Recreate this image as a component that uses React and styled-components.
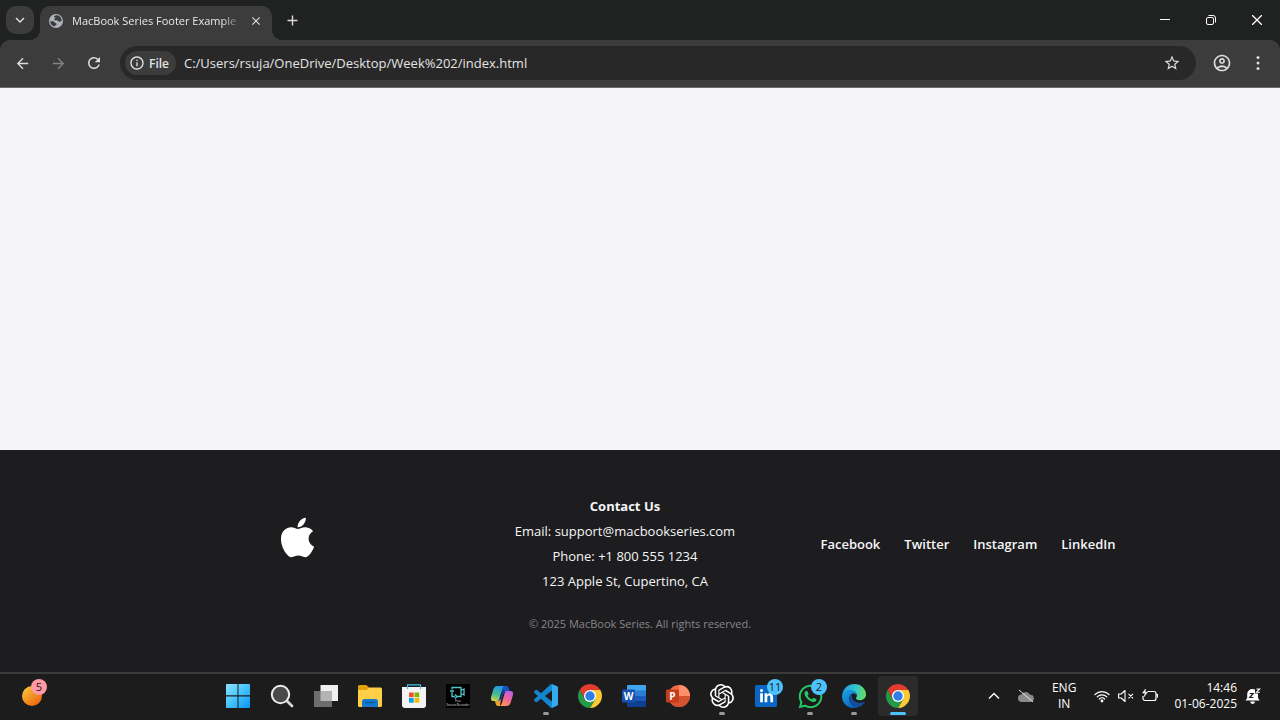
import React from "react";
import styled, { createGlobalStyle } from "styled-components";
import { FaApple, FaWhatsapp, FaLinkedinIn } from "react-icons/fa";
import { SiOpenai } from "react-icons/si";
import {
  MdArrowBack, MdArrowForward, MdRefresh, MdStarBorder,
  MdInfoOutline, MdOutlineAccountCircle, MdKeyboardArrowDown, MdClose, MdAdd,
} from "react-icons/md";

const GlobalStyle = createGlobalStyle`
  * { box-sizing: border-box; }
  body {
    margin: 0;
    font-family: "Segoe UI", "Open Sans", "Noto Sans", sans-serif;
    background: #1d1d1f;
  }
  button, input { font: inherit; color: inherit; }
  svg { display: block; }
`;

const Screen = styled.div`
  min-height: 100vh;
  display: flex;
  flex-direction: column;
`;

/* Browser */
const TabStrip = styled.header`
  height: 40px;
  display: flex;
  align-items: center;
  padding-left: 6px;
  background: #202221;
  color: #e8e8e8;
`;

const IconButton = styled.button`
  display: grid;
  place-items: center;
  flex: none;
  width: ${(p) => p.$width || 28}px;
  height: ${(p) => p.$height || 28}px;
  padding: 0;
  border: 0;
  border-radius: ${(p) => p.$radius || 0}px;
  background: ${(p) => p.$bg || "transparent"};
  color: ${(p) => p.$color || "#dcdcdc"};
`;

const Tab = styled.div`
  position: relative;
  align-self: flex-end;
  display: flex;
  align-items: center;
  width: 232px;
  height: 34px;
  margin-left: 6px;
  padding: 0 6px 4px 8px;
  border-radius: 10px 10px 0 0;
  background: #3c3c3c;
  &::before, &::after {
    content: "";
    position: absolute;
    bottom: 0;
    width: 10px;
    height: 10px;
  }
  &::before {
    right: 100%;
    background: radial-gradient(circle at 0 0, transparent 10px, #3c3c3c 10px);
  }
  &::after {
    left: 100%;
    background: radial-gradient(circle at 100% 0, transparent 10px, #3c3c3c 10px);
  }
`;

const TabTitle = styled.span`
  flex: 1;
  margin-left: 8px;
  overflow: hidden;
  white-space: nowrap;
  font-size: 11px;
  line-height: 20px;
  mask-image: linear-gradient(to right, #000 86%, transparent 98%);
`;

const WindowControls = styled.div`
  display: flex;
  margin-left: auto;
`;

const ToolbarBack = styled.div`
  background: #202221;
`;

const Toolbar = styled.nav`
  display: flex;
  align-items: center;
  gap: 8px;
  height: 48px;
  padding: 0 8px 1px;
  border-bottom: 1px solid #6a6a6a;
  border-radius: 10px 10px 0 0;
  background: #3c3c3c;
`;

const Omnibox = styled.div`
  flex: 1;
  display: flex;
  align-items: center;
  gap: 8px;
  height: 34px;
  margin: 0 4px;
  padding: 0 10px 0 5px;
  border-radius: 17px;
  background: #282828;
  color: #e4e4e4;
`;

const FileChip = styled.button`
  display: flex;
  align-items: center;
  gap: 4px;
  height: 24px;
  padding: 0 7px 0 4px;
  border: 0;
  border-radius: 12px;
  background: #3c3c3c;
  font-size: 12px;
  font-weight: 600;
`;

const Address = styled.input`
  flex: 1;
  min-width: 0;
  padding: 0;
  border: 0;
  outline: 0;
  background: transparent;
  font-size: 13px;
  line-height: 20px;
`;

/* Web page */
const Page = styled.main`
  flex: 1;
  background: #f5f5f7;
`;

const Footer = styled.footer`
  padding: 44px 20px 38px;
  background: #1d1d1f;
  color: #f5f5f7;
  font-size: 13px;
  line-height: 25px;
`;

const FooterGrid = styled.div`
  display: grid;
  grid-template-columns: 314fr 342fr 344fr;
  align-items: center;
  max-width: 1000px;
  margin: 0 auto;
`;

const Logo = styled.a`
  justify-self: center;
  padding-bottom: 14px;
  color: #fff;
`;

const Contact = styled.address`
  font-style: normal;
  text-align: center;
  p { margin: 0; }
`;

const Links = styled.nav`
  display: flex;
  justify-content: center;
  gap: 24px;
`;

const FooterLink = styled.a`
  color: #f5f5f7;
  font-weight: 600;
  text-decoration: none;
`;

const Copyright = styled.p`
  margin: 20px 0 0;
  color: #86868b;
  font-size: 11px;
  line-height: 20px;
  text-align: center;
`;

/* Taskbar */
const Taskbar = styled.section`
  display: grid;
  grid-template-columns: 218px auto 1fr;
  align-items: center;
  height: 48px;
  padding-bottom: 2px;
  border-top: 2px solid #3a3a3a;
  background: #1c1c1c;
  color: #fff;
`;

const Apps = styled.div`
  display: flex;
  gap: 4px;
`;

const AppButton = styled.button`
  position: relative;
  display: grid;
  place-items: center;
  width: 40px;
  height: 40px;
  padding: 0;
  border: 0;
  border-radius: 4px;
  background: ${(p) => (p.$active ? "#2b2b2b" : "transparent")};
  &::after {
    content: "";
    display: ${(p) => (p.$running || p.$active ? "block" : "none")};
    position: absolute;
    bottom: 1px;
    width: ${(p) => (p.$active ? 16 : 6)}px;
    height: 3px;
    border-radius: 2px;
    background: ${(p) => (p.$active ? "#4cc2ff" : "#9a9a9a")};
  }
`;

const Widgets = styled(AppButton)`
  margin-left: 12px;
`;

const Badge = styled.span`
  position: absolute;
  top: 3px;
  right: ${(p) => p.$right}px;
  width: 16px;
  height: 16px;
  border-radius: 8px;
  background: ${(p) => p.$bg};
  color: #1c1c1c;
  font-size: 11px;
  line-height: 16px;
  text-align: center;
`;

const Tray = styled.div`
  display: flex;
  align-items: center;
  justify-content: flex-end;
  padding-right: 19px;
  font-size: 12px;
  line-height: 16px;
`;

const TrayGroup = styled.div`
  display: flex;
  gap: 8px;
  margin: 0 16px 0 18px;
`;

const TrayText = styled.div`
  text-align: ${(p) => p.$align};
  margin: ${(p) => p.$margin || "0"};
`;

const Svg = ({ size = 24, children, ...rest }) => (
  <svg width={size} height={size} viewBox="0 0 24 24" fill="none" aria-hidden="true" {...rest}>
    {children}
  </svg>
);

const Globe = () => (
  <svg width="16" height="16" viewBox="0 0 16 16" aria-hidden="true">
    <circle cx="8" cy="8" r="7" fill="#aeb3b9" />
    <path d="M8.500 2.200C10.500 2.200 13.500 4 13.800 7.500c-.8.900-1.500 1.200-2.300 1.200-1.300 0-1.200-1.400-2.700-1.500-1.400 0-2.600.2-2.600-.9S7.700 5.800 7.600 5C7.500 4.200 6 4.500 6 3.600S7.200 2.300 8.500 2.200zM2.200 8.300c2-.3 4.200.1 4.700 1.200.4.900 1.700.6 1.700 1.700 0 1.100-1.700.9-2 2.400A5.800 5.800 0 0 1 2.200 8.300z" fill="#3c3c3c" />
  </svg>
);

const Chrome = () => (
  <Svg>
    <path d="M1.610 6A12 12 0 0 1 22.390 6H12L6.804 15z" fill="#e33b2e" />
    <path d="M22.390 6A12 12 0 0 1 12 24L17.196 15 12 6z" fill="#fcc934" />
    <path d="M12 24A12 12 0 0 1 1.610 6L6.804 15H17.196z" fill="#249a48" />
    <circle cx="12" cy="12" r="6" fill="#fff" />
    <circle cx="12" cy="12" r="4.700" fill="#2f7de9" />
  </Svg>
);

const Windows = () => (
  <Svg>
    <defs>
      <linearGradient id="win" x1="0" y1="0" x2="24" y2="24" gradientUnits="userSpaceOnUse">
        <stop stopColor="#8be2ff" /><stop offset=".5" stopColor="#45c3fb" /><stop offset="1" stopColor="#0a93f5" />
      </linearGradient>
    </defs>
    <path d="M1 0h10.500v11.300H0V1a1 1 0 0 1 1-1zM12.500 0H23a1 1 0 0 1 1 1v10.300H12.500zM0 12.500h11.500V24H1a1 1 0 0 1-1-1zM12.500 12.500H24V23a1 1 0 0 1-1 1H12.500z" fill="url(#win)" />
  </Svg>
);

const Search = () => (
  <Svg>
    <path d="M16.500 16.500L22 22" stroke="#d8d8d8" strokeWidth="2.800" strokeLinecap="round" />
    <circle cx="10.500" cy="10.500" r="8.700" fill="#4a4a4a" stroke="#ededed" strokeWidth="2" />
  </Svg>
);

const TaskView = () => (
  <Svg>
    <path d="M6.500 1h17.500v16H6.500z" fill="#f0f0f0" />
    <path d="M0 7h18v16H0z" fill="#6d6d6d" />
    <path d="M6.500 7H18v10H6.500z" fill="#b4b4b4" />
  </Svg>
);

const Explorer = () => (
  <Svg>
    <path d="M0 2.500A1.500 1.500 0 0 1 1.500 1h6.800L11 3.500V9H0z" fill="#e3a008" />
    <path d="M0 6h8.500L11 3.500h11.500A1.500 1.500 0 0 1 24 5v16.500a1.500 1.500 0 0 1-1.500 1.500h-21A1.500 1.500 0 0 1 0 21.500z" fill="#ffcf48" />
    <path d="M4 23v-5.500A2.500 2.500 0 0 1 6.500 15h11a2.500 2.500 0 0 1 2.500 2.500V23z" fill="#1479ce" />
    <path d="M7 18.500h10" stroke="#075598" strokeWidth="1.200" />
  </Svg>
);

const Store = () => (
  <Svg>
    <path d="M0 3h24v18a3 3 0 0 1-3 3H3a3 3 0 0 1-3-3z" fill="#f3f3f5" />
    <path d="M5.500 5V.800h13V5" stroke="#3cc2ee" strokeWidth="1.200" />
    <path d="M7 8.500h4.700v4.700H7z" fill="#f05024" /><path d="M12.500 8.500h4.700v4.700h-4.700z" fill="#7eb900" />
    <path d="M7 14h4.700v4.700H7z" fill="#00a3ee" /><path d="M12.500 14h4.700v4.700h-4.700z" fill="#feb800" />
  </Svg>
);

const RecorderIcon = styled.span`
  display: flex;
  flex-direction: column;
  align-items: center;
  width: 24px;
  height: 24px;
  padding-top: 2px;
  background: #000;
  color: #e0e0e0;
  font-size: 3px;
  line-height: 4px;
  white-space: nowrap;
`;

const Recorder = () => (
  <RecorderIcon>
    <svg width="16" height="13" viewBox="0 0 16 13" fill="none" stroke="#4fc6cc" strokeWidth="1.300" aria-hidden="true">
      <path d="M2 3.500V1.500h9v9H7M2 6v4.500h3M11 4.500l3-1.500v6l-3-1.500M5 8.500l2 2-2 2M0 5h4" />
    </svg>
    <span>Free</span>
    <span>Screen Recorder</span>
  </RecorderIcon>
);

const Copilot = () => (
  <Svg>
    <defs>
      <linearGradient id="cpA" x1="8" y1="2" x2="5" y2="18" gradientUnits="userSpaceOnUse">
        <stop stopColor="#1f9ae8" /><stop offset=".55" stopColor="#49bd8e" /><stop offset="1" stopColor="#e8d735" />
      </linearGradient>
      <linearGradient id="cpB" x1="20" y1="6" x2="12" y2="22" gradientUnits="userSpaceOnUse">
        <stop stopColor="#b45cf0" /><stop offset=".5" stopColor="#f0659c" /><stop offset="1" stopColor="#ff9a4c" />
      </linearGradient>
    </defs>
    <path d="M13 2h3.500c1.500 0 2 1 2.500 2.700L20 8h-4c-2 0-2.700 1-3.200 2.700L11 17H7z" fill="#1852c4" />
    <path d="M7.500 2h7.300c-1.300 0-2 1-2.500 2.800L9.500 14.500C9 16.200 8 17 6.500 17H3.300C1 17 .5 15 1.200 12.500l2-6.800C4 3.300 5.200 2 7.500 2z" fill="url(#cpA)" />
    <path d="M5 17h3c1.500 0 2.500-.8 3-2.500l-1 7.500H8c-1.500 0-2-1-2.400-2.500z" fill="#f0a12d" />
    <path d="M16.500 22H9.300c1.300 0 2-1 2.500-2.800l2.800-9.700C15 7.800 16 7 17.500 7h3.200c2.300 0 2.800 2 2.100 4.500l-2 6.800C20 20.700 18.800 22 16.500 22z" fill="url(#cpB)" />
    <path d="M9.800 15.500l1.800-6.300c.5-1.700 1.200-2.400 2.800-2.400" stroke="#1c1c1c" strokeWidth="1" />
  </Svg>
);

const Code = () => (
  <Svg>
    <path fillRule="evenodd" d="M23.150 2.587L18.210.210a1.494 1.494 0 0 0-1.705.290l-9.460 8.630-4.120-3.128a.999.999 0 0 0-1.276.057L.327 7.261A1 1 0 0 0 .326 8.740L3.899 12 .326 15.260a1 1 0 0 0 .001 1.479L1.650 17.940a.999.999 0 0 0 1.276.057l4.120-3.128 9.460 8.630a1.492 1.492 0 0 0 1.704.290l4.942-2.377A1.500 1.500 0 0 0 24 20.060V3.939a1.500 1.500 0 0 0-.850-1.352zm-5.146 14.861L10.826 12l7.178-5.448v10.896z" fill="#1286d0" />
    <path d="M18 .2l5.200 2.400a1.500 1.500 0 0 1 .8 1.300v16.200a1.500 1.500 0 0 1-.8 1.300L18 23.800z" fill="#36aaf0" />
  </Svg>
);

const Word = () => (
  <Svg>
    <path d="M5 2a1 1 0 0 1 1-1h17a1 1 0 0 1 1 1v5H5z" fill="#41a5ee" />
    <path d="M5 6.500h19V12H5z" fill="#2b7cd3" /><path d="M5 12h19v5.500H5z" fill="#185abd" />
    <path d="M5 17.500h19V22a1 1 0 0 1-1 1H6a1 1 0 0 1-1-1z" fill="#103f91" />
    <rect y="5.500" width="13" height="13" rx="1" fill="#1752b0" />
    <text x="6.500" y="15.700" fill="#fff" fontSize="10" fontWeight="700" textAnchor="middle">W</text>
  </Svg>
);

const PowerPoint = () => (
  <Svg>
    <circle cx="13" cy="12" r="11" fill="#ed6c47" />
    <path d="M13 1a11 11 0 0 1 11 11H13z" fill="#ff8f6b" />
    <path d="M2 12h22a11 11 0 0 1-22 0z" fill="#d35230" />
    <rect y="5.500" width="13" height="13" rx="1" fill="#c43e1c" />
    <text x="6.500" y="15.700" fill="#fff" fontSize="10" fontWeight="700" textAnchor="middle">P</text>
  </Svg>
);

const Edge = () => (
  <Svg>
    <defs>
      <linearGradient id="edgeTop" x1="1" y1="6" x2="24" y2="10" gradientUnits="userSpaceOnUse">
        <stop stopColor="#269bdc" /><stop offset=".5" stopColor="#32c5cf" /><stop offset="1" stopColor="#67df59" />
      </linearGradient>
      <linearGradient id="edgeLeft" x1="2" y1="8" x2="12" y2="24" gradientUnits="userSpaceOnUse">
        <stop stopColor="#189ddf" /><stop offset="1" stopColor="#0c62bd" />
      </linearGradient>
    </defs>
    <path d="M.2 11C1 4.500 6 0 12.300 0 19 0 24 5 24 10.200c0 3.600-2.600 6-6 6-2.600 0-4-1-4-2 0-.7.900-1 .9-2.600C14.900 9 12.500 7 9 6.500c-4-.5-7 1.500-8.800 4.500z" fill="url(#edgeTop)" />
    <path d="M.1 12C.5 8 4 6 8 6c3.500 0 6.500 2.300 6.900 5-1.200-1.500-3.800-2-5.400-1C5 13 8 22.500 15 23.600 7 25.800-.2 20 .1 12z" fill="url(#edgeLeft)" />
    <path d="M10 9.600C5 13 7 22.500 14.500 23.700c3.600-.6 6.500-2.500 8.100-5.200.4-.6-.1-1-.8-.6C16 20.700 8.500 17 10 9.600z" fill="#114d98" />
  </Svg>
);

const LinkedInTile = styled.span`
  display: grid;
  place-items: center;
  width: 22px;
  height: 22px;
  border-radius: 2px;
  background: #0a66c2;
  color: #fff;
`;

const apps = [
  { name: "Start", icon: <Windows /> },
  { name: "Search", icon: <Search /> },
  { name: "Task View", icon: <TaskView /> },
  { name: "File Explorer", icon: <Explorer /> },
  { name: "Microsoft Store", icon: <Store /> },
  { name: "Free Screen Recorder", icon: <Recorder /> },
  { name: "Copilot", icon: <Copilot /> },
  { name: "Visual Studio Code", icon: <Code />, running: true },
  { name: "Google Chrome", icon: <Chrome /> },
  { name: "Word", icon: <Word /> },
  { name: "PowerPoint", icon: <PowerPoint /> },
  { name: "ChatGPT", icon: <SiOpenai size={24} color="#fff" />, running: true },
  { name: "LinkedIn", icon: <LinkedInTile><FaLinkedinIn size={15} /></LinkedInTile>, badge: "11" },
  { name: "WhatsApp", icon: <FaWhatsapp size={27} color="#25c863" />, running: true, badge: "2" },
  { name: "Edge", icon: <Edge />, running: true },
  { name: "Chrome window", icon: <Chrome />, active: true },
];

export default function App() {
  return (
    <Screen>
      <GlobalStyle />
      <TabStrip>
        <IconButton $bg="#3c3c3c" $radius={10} aria-label="Search tabs"><MdKeyboardArrowDown size={18} /></IconButton>
        <Tab>
          <Globe />
          <TabTitle>MacBook Series Footer Example</TabTitle>
          <IconButton $width={20} $height={20} aria-label="Close tab"><MdClose size={14} /></IconButton>
        </Tab>
        <IconButton $width={40} aria-label="New tab"><MdAdd size={17} /></IconButton>
        <WindowControls>
          <IconButton $width={46} $color="#fff" aria-label="Minimize">
            <Svg size={10} viewBox="0 0 10 10" stroke="currentColor"><path d="M0 4.500h10" /></Svg>
          </IconButton>
          <IconButton $width={46} $color="#fff" aria-label="Restore">
            <Svg size={10} viewBox="0 0 10 10" stroke="currentColor">
              <rect x=".5" y="2.500" width="7" height="7" rx="1.500" />
              <path d="M2.500 .5H7A2.500 2.500 0 0 1 9.500 3v4.500" />
            </Svg>
          </IconButton>
          <IconButton $width={46} $color="#fff" aria-label="Close">
            <Svg size={10} viewBox="0 0 10 10" stroke="currentColor" strokeWidth="1.300"><path d="M0 0l10 10M10 0L0 10" /></Svg>
          </IconButton>
        </WindowControls>
      </TabStrip>
      <ToolbarBack>
        <Toolbar aria-label="Browser">
          <IconButton aria-label="Back"><MdArrowBack size={17} /></IconButton>
          <IconButton $color="#838383" aria-label="Forward"><MdArrowForward size={17} /></IconButton>
          <IconButton aria-label="Reload"><MdRefresh size={18} /></IconButton>
          <Omnibox>
            <FileChip><MdInfoOutline size={16} />File</FileChip>
            <Address aria-label="Address" defaultValue="C:/Users/rsuja/OneDrive/Desktop/Week%202/index.html" />
            <IconButton aria-label="Bookmark"><MdStarBorder size={18} /></IconButton>
          </Omnibox>
          <IconButton aria-label="Profile"><MdOutlineAccountCircle size={20} /></IconButton>
          <IconButton aria-label="Menu">
            <Svg size={16} viewBox="0 0 16 16" fill="currentColor">
              <circle cx="8" cy="2.500" r="1.500" /><circle cx="8" cy="8" r="1.500" /><circle cx="8" cy="13.500" r="1.500" />
            </Svg>
          </IconButton>
        </Toolbar>
      </ToolbarBack>
      <Page />
      <Footer>
        <FooterGrid>
          <Logo href="#" aria-label="Apple"><FaApple size={45} /></Logo>
          <Contact>
            <p><strong>Contact Us</strong></p>
            <p>Email: support@macbookseries.com</p>
            <p>Phone: +1 800 555 1234</p>
            <p>123 Apple St, Cupertino, CA</p>
          </Contact>
          <Links aria-label="Social">
            {["Facebook", "Twitter", "Instagram", "LinkedIn"].map((name) => (
              <FooterLink key={name} href="#">{name}</FooterLink>
            ))}
          </Links>
        </FooterGrid>
        <Copyright>© 2025 MacBook Series. All rights reserved.</Copyright>
      </Footer>
      <Taskbar aria-label="Taskbar">
        <Widgets aria-label="Widgets">
          <Svg>
            <defs>
              <linearGradient id="sun" x1="4" y1="3" x2="20" y2="21" gradientUnits="userSpaceOnUse">
                <stop stopColor="#f8c53c" /><stop offset="1" stopColor="#ec5f0c" />
              </linearGradient>
            </defs>
            <circle cx="12" cy="12" r="10" fill="url(#sun)" />
          </Svg>
          <Badge $bg="#ff99a4" $right={5}>5</Badge>
        </Widgets>
        <Apps>
          {apps.map(({ name, icon, running, active, badge }) => (
            <AppButton key={name} aria-label={name} $running={running} $active={active}>
              {icon}
              {badge && <Badge $bg="#4cc2ff" $right={3}>{badge}</Badge>}
            </AppButton>
          ))}
        </Apps>
        <Tray>
          <IconButton $width={32} $color="#fff" aria-label="Hidden icons">
            <Svg size={12} viewBox="0 0 12 12" stroke="currentColor" strokeWidth="1.400"><path d="M1 8.500l5-5 5 5" /></Svg>
          </IconButton>
          <IconButton $width={32} $color="#fff" aria-label="OneDrive">
            <Svg size={16} viewBox="0 0 16 16">
              <path d="M4 14a3.700 3.700 0 0 1-.5-7.400A4.700 4.700 0 0 1 12 6.800 3.600 3.600 0 0 1 12.500 14z" fill="#8a8a8a" />
              <path d="M1 2l14 12" stroke="#e8e8e8" />
            </Svg>
          </IconButton>
          <TrayText $align="center" $margin="0 0 0 10px">ENG<br />IN</TrayText>
          <TrayGroup>
            <Svg size={16} viewBox="0 0 16 16" stroke="#fff" strokeWidth="1.200" strokeLinecap="round">
              <path d="M1 6.500a10 10 0 0 1 14 0M3.200 8.800a6.800 6.800 0 0 1 9.600 0M5.400 11a3.700 3.700 0 0 1 5.200 0" />
              <circle cx="8" cy="13" r=".8" fill="#fff" />
            </Svg>
            <Svg size={16} viewBox="0 0 16 16" stroke="#fff" strokeWidth="1.100" strokeLinejoin="round">
              <path d="M.6 6h2.600L7 2.500v11L3.200 10H.6zM10.500 5.800l4.500 4.500M15 5.800l-4.500 4.500" />
            </Svg>
            <Svg size={16} viewBox="0 0 16 16" stroke="#fff" strokeWidth="1.200">
              <path d="M5.500 3.500H12a2 2 0 0 1 2 2v5a2 2 0 0 1-2 2H3a2 2 0 0 1-2-2V8M14.500 6.500h1v3" />
              <path d="M3.500 1L.5 5h2.700L2 8.800 5.500 4.200H3z" fill="#fff" strokeWidth=".5" />
            </Svg>
          </TrayGroup>
          <TrayText $align="right" $margin="0 8px 0 0">14:46<br />01-06-2025</TrayText>
          <Svg size={16} viewBox="0 0 16 16">
            <path d="M.5 12.500L2.200 10V6.500C2.200 3 4.800 1 7.500 1c1 0 1.800.2 2.500.6V5.500h3V10l1.700 2.500zM5.200 13.500h4.800a2.400 2.400 0 0 1-4.800 0z" fill="#fff" />
            <path d="M4.800 5.500h3.400L4.800 9.500h3.600" stroke="#1c1c1c" strokeWidth="1.200" />
            <path d="M11.500 1h3.200l-3.200 3.200h3.400" stroke="#fff" strokeWidth="1.100" />
          </Svg>
        </Tray>
      </Taskbar>
    </Screen>
  );
}
